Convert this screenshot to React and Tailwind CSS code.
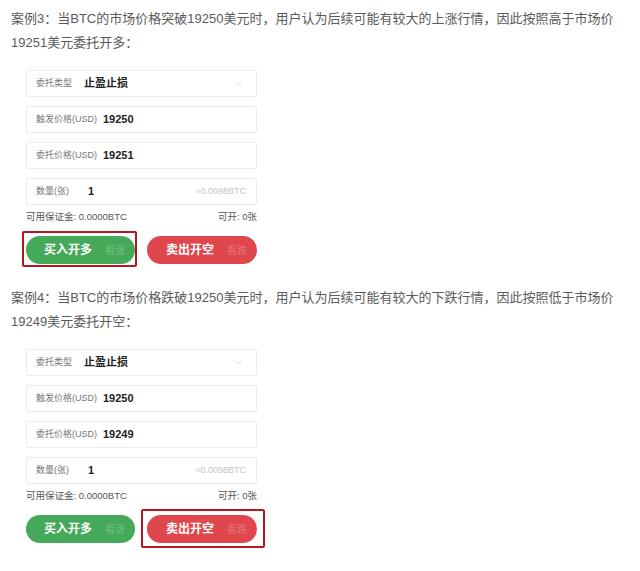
import React from "react";
import { ChevronDown } from "lucide-react";

const font = { fontFamily: '"Liberation Sans", "Noto Sans CJK SC", sans-serif' };

const cases = [
  {
    line1: "案例3：当BTC的市场价格突破19250美元时，用户认为后续可能有较大的上涨行情，因此按照高于市场价",
    line2: "19251美元委托开多：",
    trigger: "19250",
    price: "19251",
    pick: "buy",
  },
  {
    line1: "案例4：当BTC的市场价格跌破19250美元时，用户认为后续可能有较大的下跌行情，因此按照低于市场价",
    line2: "19249美元委托开空：",
    trigger: "19250",
    price: "19249",
    pick: "sell",
  },
];

const Field = ({ label, value, labelWidth, right, chevron }) => (
  <div className="flex h-[27px] items-center rounded-[2px] border border-[#ededed] bg-white pl-[9px] pr-[10px] shadow-[0_0_2px_rgba(0,0,0,0.04)]">
    <span className={`shrink-0 whitespace-nowrap text-[9px] text-[#777] ${labelWidth}`}>{label}</span>
    <span className="text-[11px] font-bold text-[#222]">{value}</span>
    <div className="flex-1" />
    {right && <span className="text-[9px] text-[#c4c4c4]">{right}</span>}
    {chevron && <ChevronDown size={11} strokeWidth={1.5} className="mr-[2px] text-[#c8c8c8]" />}
  </div>
);

const CaseBlock = ({ item }) => (
  <div>
    <p className="whitespace-nowrap text-[13px] leading-[24px] text-[#5a5a5a]">
      {item.line1}
      <br />
      {item.line2}
    </p>

    <div className="ml-[15px] mt-[15px] w-[231px]">
      <div className="flex flex-col gap-[9px]">
        <Field label="委托类型" value="止盈止损" labelWidth="w-[48px]" chevron />
        <Field label="触发价格(USD)" value={item.trigger} labelWidth="w-[67px]" />
        <Field label="委托价格(USD)" value={item.price} labelWidth="w-[67px]" />
        <Field label="数量(张)" value="1" labelWidth="w-[52px]" right="≈0.0098BTC" />
      </div>

      <div className="mt-[6px] flex h-[12px] items-center justify-between text-[9.5px] text-[#555]">
        <span>可用保证金: 0.0000BTC</span>
        <span>可开: 0张</span>
      </div>

      <div className="mt-[13px] flex gap-[12px]">
        <div className="relative">
          <button className="flex h-[28px] w-[109px] items-center whitespace-nowrap rounded-full bg-[#45a95a] pl-[18px] text-white">
            <span className="text-[12px] font-bold">买入开多</span>
            <span className="ml-[13px] text-[10px] text-white/25">看涨</span>
          </button>
          {item.pick === "buy" && (
            <span className="pointer-events-none absolute -bottom-[3px] -left-[4px] -right-[2px] -top-[5px] rounded-[2px] border-2 border-[#b3171f]" />
          )}
        </div>
        <div className="relative">
          <button className="flex h-[28px] w-[110px] items-center whitespace-nowrap rounded-full bg-[#e0474d] pl-[19px] text-white">
            <span className="text-[12px] font-bold">卖出开空</span>
            <span className="ml-[13px] text-[10px] text-white/25">看跌</span>
          </button>
          {item.pick === "sell" && (
            <span className="pointer-events-none absolute -bottom-[5px] -left-[6px] -right-[8px] -top-[6px] rounded-[2px] border-2 border-[#b3171f]" />
          )}
        </div>
      </div>
    </div>
  </div>
);

export default function App() {
  return (
    <div style={font} className="min-h-[571px] w-[640px] bg-white pl-[11px] pt-[7px]">
      <div className="flex flex-col gap-[22px]">
        {cases.map((item) => (
          <CaseBlock key={item.line2} item={item} />
        ))}
      </div>
    </div>
  );
}
